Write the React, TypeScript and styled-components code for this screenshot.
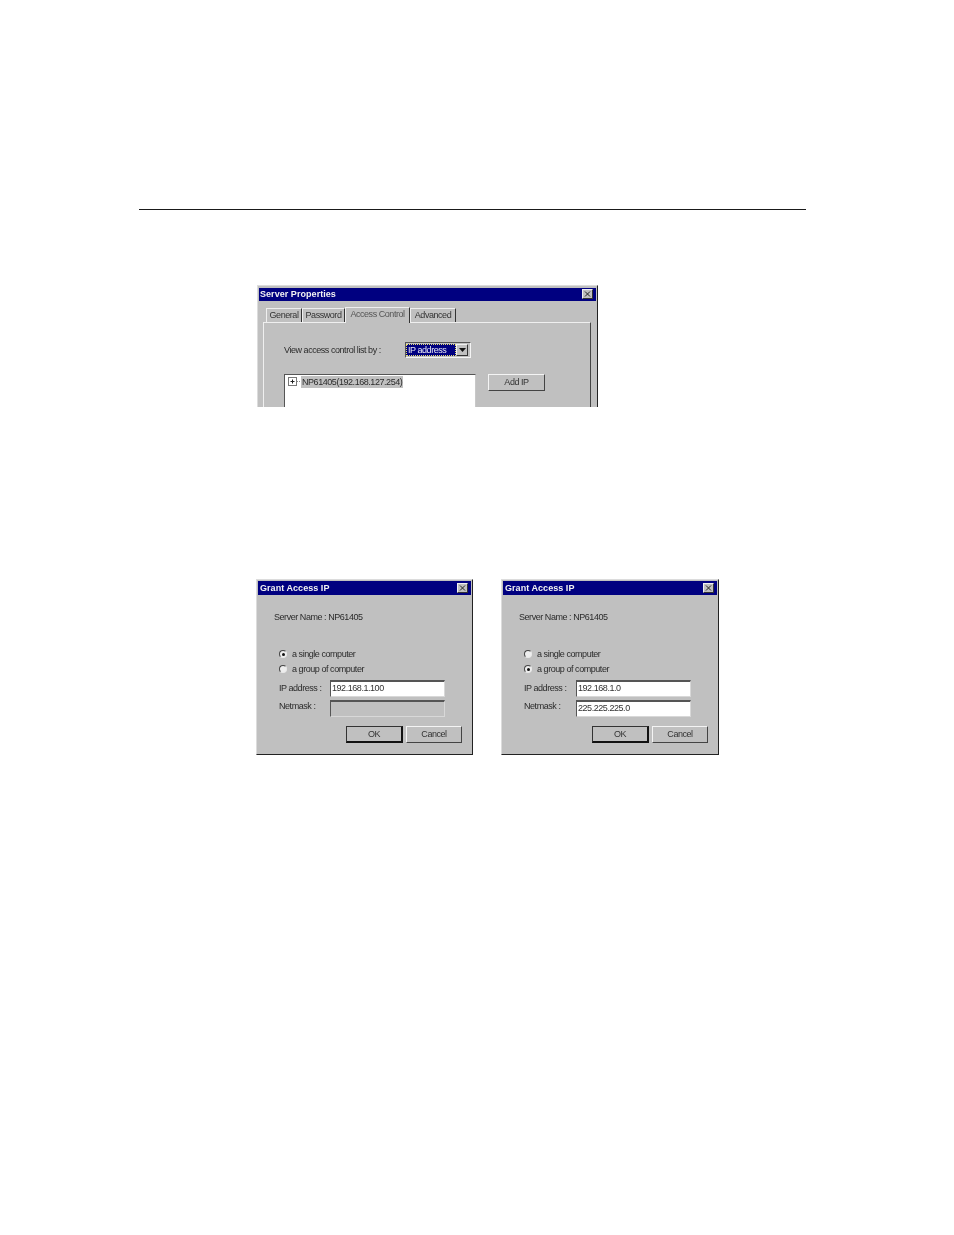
import styled, { createGlobalStyle } from "styled-components";

const GlobalStyle = createGlobalStyle`
  html, body {
    margin: 0;
    padding: 0;
    background: #fff;
  }
`;

const Page = styled.div`
  box-sizing: border-box;
  width: 954px;
  height: 1235px;
  padding: 209px 148px 0 139px;
  background: #fff;
  font-family: "Liberation Sans", Arial, sans-serif;
  font-size: 9px;
  letter-spacing: -0.45px;
  color: #2b2b2b;
  overflow: hidden;
`;

const Rule = styled.div`
  height: 1px;
  background: #1a1a1a;
`;

const DialogFrame = styled.div<{ $width: number }>`
  box-sizing: border-box;
  width: ${(p) => p.$width}px;
  background: #c0c0c0;
  border-top: 1px solid #dcdcdc;
  border-left: 1px solid #dcdcdc;
  border-right: 1px solid #222;
  border-bottom: 1px solid #222;
  padding: 1px;
  filter: blur(0.3px);
`;

const TopDialog = styled(DialogFrame)`
  height: 122px;
  margin: 75px 0 0 118px;
  padding-top: 2px;
  border-bottom: 0;
  overflow: hidden;
`;

const TitleBar = styled.div`
  display: flex;
  align-items: center;
  justify-content: space-between;
  box-sizing: border-box;
  height: 14px;
  padding: 0 3px 0 2px;
  background: #000080;
  color: #f2f2f2;
  font-size: 9px;
  font-weight: 700;
  letter-spacing: 0.05px;
`;

const TopTitleBar = styled(TitleBar)`
  height: 13px;
  padding: 0 3px 1px 1px;
`;

const CloseButton = styled.span`
  display: flex;
  align-items: center;
  justify-content: center;
  box-sizing: border-box;
  width: 11px;
  height: 10px;
  background: #c0c0c0;
  border: 1px solid;
  border-color: #f0f0f0 #333 #333 #f0f0f0;
`;

const Tabs = styled.div`
  display: flex;
  align-items: flex-end;
  height: 21px;
  padding-left: 7px;
`;

const Tab = styled.div<{ $active?: boolean; $width: number }>`
  box-sizing: border-box;
  width: ${(p) => p.$width}px;
  height: ${(p) => (p.$active ? 16 : 14)}px;
  margin-bottom: ${(p) => (p.$active ? -1 : 0)}px;
  padding-top: 1px;
  background: #c0c0c0;
  border-top: 1px solid #efefef;
  border-left: 1px solid #efefef;
  border-right: 1px solid #333;
  text-align: center;
  color: ${(p) => (p.$active ? "#555" : "#333")};
  position: relative;
  z-index: ${(p) => (p.$active ? 1 : 0)};
`;

const TabPanel = styled.div`
  box-sizing: border-box;
  width: 328px;
  height: 90px;
  margin-left: 4px;
  padding: 19px 0 0 20px;
  border-top: 1px solid #efefef;
  border-left: 1px solid #efefef;
  border-right: 1px solid #444;
`;

const ComboRow = styled.div`
  display: flex;
  align-items: center;
  height: 16px;
`;

const ComboLabel = styled.span`
  width: 121px;
`;

const Combo = styled.div`
  display: flex;
  box-sizing: border-box;
  width: 66px;
  height: 16px;
  border: 1px solid;
  border-color: #555 #f4f4f4 #f4f4f4 #555;
  background: #c0c0c0;
  padding: 1px 2px 1px 0;
`;

const ComboValue = styled.span`
  flex: 1;
  box-sizing: border-box;
  background: #000080;
  border: 1px dotted #e8e070;
  color: #e8e8f4;
  line-height: 10px;
  padding-left: 1px;
  white-space: nowrap;
`;

const ComboArrow = styled.span`
  display: flex;
  align-items: center;
  justify-content: center;
  box-sizing: border-box;
  width: 12px;
  background: #c0c0c0;
  border: 1px solid;
  border-color: #f0f0f0 #333 #333 #f0f0f0;
`;

const ListRow = styled.div`
  display: flex;
  align-items: flex-start;
  gap: 12px;
  margin-top: 16px;
`;

const TreeBox = styled.div`
  display: flex;
  align-items: flex-start;
  box-sizing: border-box;
  width: 192px;
  height: 60px;
  padding: 1px 0 0 3px;
  background: #fff;
  border: 1px solid;
  border-color: #555 #c8c8c8 #c8c8c8 #555;
`;

const TreeToggle = styled.span`
  display: flex;
  align-items: center;
  margin-top: 1px;
`;

const TreeLabel = styled.span`
  background: #c0c0c0;
  line-height: 12px;
  padding: 0 1px;
  white-space: nowrap;
`;

const Button = styled.div<{ $default?: boolean; $width: number }>`
  box-sizing: border-box;
  width: ${(p) => p.$width}px;
  height: 17px;
  line-height: 15px;
  text-align: center;
  background: #c0c0c0;
  border-style: solid;
  border-width: ${(p) => (p.$default ? "1px 2px 2px 1px" : "1px")};
  border-color: ${(p) =>
    p.$default ? "#333 #111 #111 #333" : "#f4f4f4 #444 #444 #f4f4f4"};
  color: #333;
`;

const DialogRow = styled.div`
  display: flex;
  gap: 28px;
  margin: 172px 0 0 117px;
`;

const GrantDialog = styled(DialogFrame)`
  height: 176px;
`;

const ServerName = styled.div`
  height: 12px;
  line-height: 12px;
  margin: 16px 0 0 16px;
`;

const RadioGroup = styled.div`
  display: flex;
  flex-direction: column;
  gap: 3px;
  margin: 25px 0 0 21px;
`;

const RadioRow = styled.div`
  display: flex;
  align-items: center;
  gap: 5px;
  height: 12px;
`;

const Radio = styled.span<{ $checked?: boolean }>`
  display: flex;
  align-items: center;
  justify-content: center;
  box-sizing: border-box;
  width: 8px;
  height: 8px;
  border-radius: 50%;
  background: #eee;
  border: 1px solid;
  border-color: #444 #e8e8e8 #e8e8e8 #444;

  &::after {
    content: "";
    width: 3px;
    height: 3px;
    border-radius: 50%;
    background: ${(p) => (p.$checked ? "#111" : "transparent")};
  }
`;

const Fields = styled.div<{ $labelWidth: number }>`
  display: grid;
  grid-template-columns: ${(p) => p.$labelWidth}px 115px;
  row-gap: 3px;
  margin: 5px 0 0 21px;
`;

const FieldLabel = styled.span<{ $top: number }>`
  align-self: start;
  margin-top: ${(p) => p.$top}px;
  line-height: 12px;
`;

const FieldInput = styled.div<{ $disabled?: boolean }>`
  box-sizing: border-box;
  height: 17px;
  line-height: 13px;
  padding-left: 1px;
  background: ${(p) => (p.$disabled ? "#c0c0c0" : "#fff")};
  border: 1px solid;
  border-color: #555 #d8d8d8 #d8d8d8 #555;
  border-top-width: 2px;
  color: #333;
`;

const Buttons = styled.div`
  display: flex;
  justify-content: flex-end;
  gap: 3px;
  margin: 9px 9px 0 0;
`;

const CloseIcon = () => (
  <svg width="7" height="6" viewBox="0 0 7 6">
    <path d="M1 0.5 L6 5.5 M6 0.5 L1 5.5" stroke="#222" strokeWidth="1" />
  </svg>
);

const ArrowIcon = () => (
  <svg width="7" height="4" viewBox="0 0 7 4">
    <path d="M0 0 H7 L3.5 4 Z" fill="#111" />
  </svg>
);

const PlusIcon = () => (
  <svg width="13" height="9" viewBox="0 0 13 9">
    <rect x="0.5" y="0.5" width="8" height="8" fill="#fff" stroke="#777" />
    <path d="M2.5 4.5 H6.5 M4.5 2.5 V6.5" stroke="#222" />
    <path d="M9 4.5 H13" stroke="#888" strokeDasharray="1 1" />
  </svg>
);

interface GrantProps {
  width: number;
  group?: boolean;
  ip: string;
  netmask?: string;
}

function GrantAccess({ width, group, ip, netmask }: GrantProps) {
  return (
    <GrantDialog $width={width}>
      <TitleBar>
        Grant Access IP
        <CloseButton>
          <CloseIcon />
        </CloseButton>
      </TitleBar>
      <ServerName>Server Name : NP61405</ServerName>
      <RadioGroup>
        <RadioRow>
          <Radio $checked={!group} />a single computer
        </RadioRow>
        <RadioRow>
          <Radio $checked={group} />a group of computer
        </RadioRow>
      </RadioGroup>
      <Fields $labelWidth={width - 166}>
        <FieldLabel $top={2}>IP address :</FieldLabel>
        <FieldInput>{ip}</FieldInput>
        <FieldLabel $top={0}>Netmask :</FieldLabel>
        <FieldInput $disabled={!netmask}>{netmask}</FieldInput>
      </Fields>
      <Buttons>
        <Button $default $width={57}>
          OK
        </Button>
        <Button $width={56}>Cancel</Button>
      </Buttons>
    </GrantDialog>
  );
}

export default function App() {
  return (
    <Page>
      <GlobalStyle />
      <Rule />
      <TopDialog $width={341}>
        <TopTitleBar>
          Server Properties
          <CloseButton>
            <CloseIcon />
          </CloseButton>
        </TopTitleBar>
        <Tabs>
          <Tab $width={36}>General</Tab>
          <Tab $width={43}>Password</Tab>
          <Tab $active $width={65}>
            Access Control
          </Tab>
          <Tab $width={46}>Advanced</Tab>
        </Tabs>
        <TabPanel>
          <ComboRow>
            <ComboLabel>View access control list by :</ComboLabel>
            <Combo>
              <ComboValue>IP address</ComboValue>
              <ComboArrow>
                <ArrowIcon />
              </ComboArrow>
            </Combo>
          </ComboRow>
          <ListRow>
            <TreeBox>
              <TreeToggle>
                <PlusIcon />
              </TreeToggle>
              <TreeLabel>NP61405(192.168.127.254)</TreeLabel>
            </TreeBox>
            <Button $width={57}>Add IP</Button>
          </ListRow>
        </TabPanel>
      </TopDialog>
      <DialogRow>
        <GrantAccess width={217} ip="192.168.1.100" />
        <GrantAccess
          width={218}
          group
          ip="192.168.1.0"
          netmask="225.225.225.0"
        />
      </DialogRow>
    </Page>
  );
}
